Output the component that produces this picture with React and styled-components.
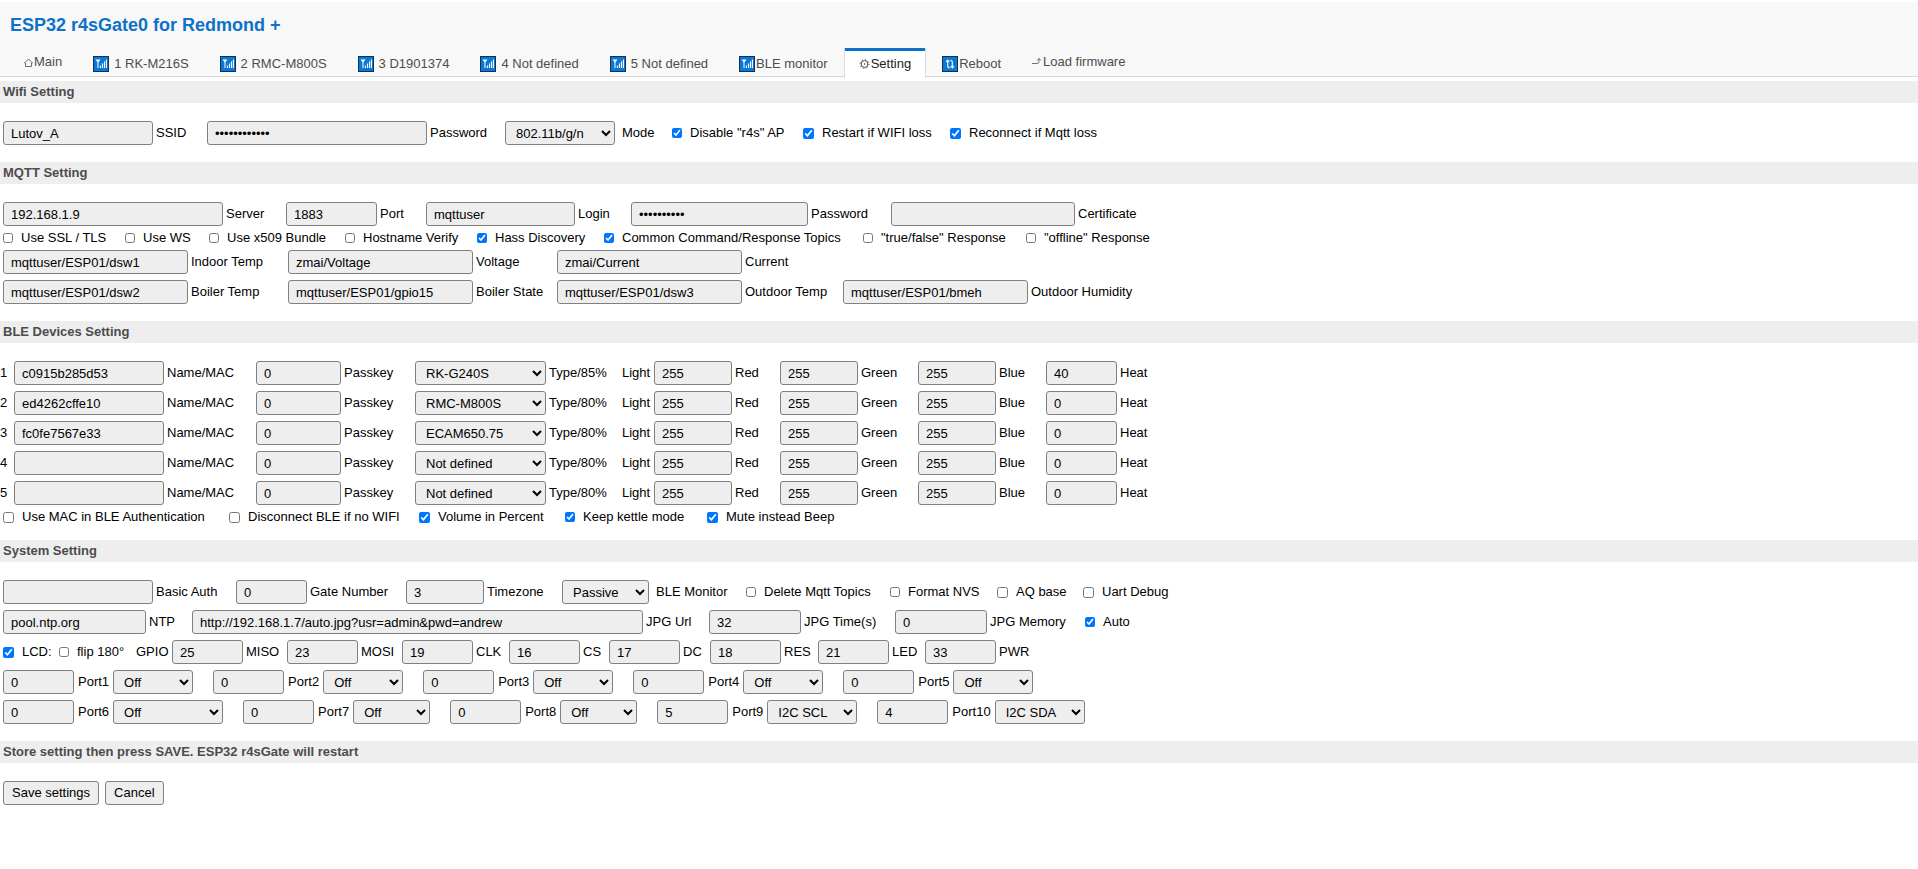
import React, { useId } from "react"
import styled, { createGlobalStyle } from "styled-components"

const devices = [
  { mac: "c0915b285d53", type: "RK-G240S", level: "85%", heat: "40" },
  { mac: "ed4262cffe10", type: "RMC-M800S", level: "80%", heat: "0" },
  { mac: "fc0fe7567e33", type: "ECAM650.75", level: "80%", heat: "0" },
  { mac: "", type: "Not defined", level: "80%", heat: "0" },
  { mac: "", type: "Not defined", level: "80%", heat: "0" },
]

const deviceTypes = ["Not defined", "RK-G240S", "RMC-M800S", "ECAM650.75"]

const lcdPins = [
  { name: "MISO", pin: "25", cell: 115 },
  { name: "MOSI", pin: "23", cell: 115 },
  { name: "CLK", pin: "19", cell: 107 },
  { name: "CS", pin: "16", cell: 100 },
  { name: "DC", pin: "17", cell: 101 },
  { name: "RES", pin: "18", cell: 108 },
  { name: "LED", pin: "21", cell: 107 },
  { name: "PWR", pin: "33", cell: 107 },
]

const portRows = [
  [
    { id: 1, pin: "0", mode: "Off", width: 80 },
    { id: 2, pin: "0", mode: "Off", width: 80 },
    { id: 3, pin: "0", mode: "Off", width: 80 },
    { id: 4, pin: "0", mode: "Off", width: 80 },
    { id: 5, pin: "0", mode: "Off", width: 80 },
  ],
  [
    { id: 6, pin: "0", mode: "Off", width: 110 },
    { id: 7, pin: "0", mode: "Off", width: 77 },
    { id: 8, pin: "0", mode: "Off", width: 77 },
    { id: 9, pin: "5", mode: "I2C SCL", width: 90 },
    { id: 10, pin: "4", mode: "I2C SDA", width: 90 },
  ],
]

const SignalIcon = () => (
  <Badge viewBox="0 0 16 16" aria-hidden="true">
    <rect x="0.5" y="0.5" width="15" height="15" fill="#0a78d6" stroke="#12304f" />
    <path d="M2.5 3.5h5L5 6.8z" fill="#fff" />
    <path d="M5 6v6" fill="none" stroke="#fff" />
    <path d="M7.4 12V9.5M9.5 12V7.5M11.5 12V5.5M13.4 12V3.5" stroke="#fff" strokeWidth="1.1" />
  </Badge>
)

const RebootIcon = () => (
  <Badge viewBox="0 0 16 16" aria-hidden="true">
    <rect x="0.5" y="0.5" width="15" height="15" fill="#0a78d6" stroke="#12304f" />
    <path
      d="M4 6l1.7-2 1.7 2M5.7 4.5v5.3q0 2 2 2M12 10l-1.7 2-1.7-2M10.3 11.5V6.2q0-2-2-2"
      fill="none"
      stroke="#fff"
      strokeWidth="1.1"
    />
  </Badge>
)

const HomeIcon = () => (
  <Glyph viewBox="0 0 9 12" aria-hidden="true">
    <path d="M0.5 7L4.5 3l4 4H7.5v3.5h-6V7z" />
  </Glyph>
)

const GearIcon = () => (
  <Glyph viewBox="0 0 11 12" $width={11} aria-hidden="true">
    <circle cx="5.5" cy="6" r="3.4" />
    <circle cx="5.5" cy="6" r="4.4" strokeDasharray="1.2 2.25" />
    <circle cx="5.5" cy="6" r="0.4" />
  </Glyph>
)

const UploadIcon = () => (
  <Glyph viewBox="0 0 10 12" $width={10} aria-hidden="true">
    <path d="M0 7.5h5q2 0 2-2V2.5M5 4.5l2-2 2 2" />
  </Glyph>
)

const tabs = [
  { text: "Main", icon: <HomeIcon />, plain: true },
  { text: "1 RK-M216S", icon: <SignalIcon />, spaced: true },
  { text: "2 RMC-M800S", icon: <SignalIcon />, spaced: true },
  { text: "3 D1901374", icon: <SignalIcon />, spaced: true },
  { text: "4 Not defined", icon: <SignalIcon />, spaced: true },
  { text: "5 Not defined", icon: <SignalIcon />, spaced: true },
  { text: "BLE monitor", icon: <SignalIcon /> },
  { text: "Setting", icon: <GearIcon />, active: true },
  { text: "Reboot", icon: <RebootIcon /> },
  { text: "Load firmware", icon: <UploadIcon />, plain: true },
]

const Field = ({ label, value, width, cell, type = "text" }) => {
  const id = useId()
  return (
    <Cell $cell={cell}>
      <TextInput id={id} type={type} defaultValue={value} $width={width} />
      <label htmlFor={id}>{label}</label>
    </Cell>
  )
}

const Choice = ({ label, value, options = [value], width, cell, wide }) => {
  const id = useId()
  return (
    <Cell $cell={cell} $wide={wide}>
      <Select id={id} defaultValue={value} $width={width}>
        {options.map(option => (
          <option key={option}>{option}</option>
        ))}
      </Select>
      <label htmlFor={id}>{label}</label>
    </Cell>
  )
}

const Check = ({ label, checked, large, cell }) => (
  <CheckLabel $cell={cell}>
    <Checkbox type="checkbox" defaultChecked={checked} $large={large} />
    {label}
  </CheckLabel>
)

const Port = ({ id, pin, mode, width }) => (
  <PortCell>
    <TextInput id={`port${id}`} type="text" defaultValue={pin} $width={71} />
    <label htmlFor={`port${id}`}>Port{id}</label>
    <Select aria-label={`Port${id} mode`} defaultValue={mode} $width={width}>
      {["Off", "I2C SCL", "I2C SDA"].map(option => (
        <option key={option}>{option}</option>
      ))}
    </Select>
  </PortCell>
)

export default () => (
  <>
    <GlobalStyle />
    <Header>
      <h1>ESP32 r4sGate0 for Redmond +</h1>
      <Nav>
        {tabs.map(tab => (
          <Tab
            key={tab.text}
            href="#"
            $active={tab.active}
            $plain={tab.plain}
            $spaced={tab.spaced}
          >
            {tab.icon}
            {tab.text}
          </Tab>
        ))}
      </Nav>
    </Header>
    <form onSubmit={e => e.preventDefault()}>
      <Heading>Wifi Setting</Heading>
      <Fields>
        <Row>
          <Field label="SSID" value="Lutov_A" width={150} cell={204} />
          <Field label="Password" type="password" value="esp32gateway" width={220} cell={298} />
          <Choice label="Mode" value="802.11b/g/n" width={110} cell={167} wide />
          <Check label={`Disable "r4s" AP`} checked cell={131} />
          <Check label="Restart if WIFI loss" checked large cell={147} />
          <Check label="Reconnect if Mqtt loss" checked large />
        </Row>
      </Fields>

      <Heading>MQTT Setting</Heading>
      <Fields>
        <Row>
          <Field label="Server" value="192.168.1.9" width={220} cell={283} />
          <Field label="Port" value="1883" width={91} cell={140} />
          <Field label="Login" value="mqttuser" width={149} cell={205} />
          <Field label="Password" type="password" value="mqttsecret" width={177} cell={260} />
          <Field label="Certificate" value="" width={184} />
        </Row>
        <CheckRow>
          <Check label="Use SSL / TLS" cell={122} />
          <Check label="Use WS" cell={84} />
          <Check label="Use x509 Bundle" cell={136} />
          <Check label="Hostname Verify" cell={132} />
          <Check label="Hass Discovery" checked cell={127} />
          <Check label="Common Command/Response Topics" checked cell={259} />
          <Check label={`"true/false" Response`} cell={163} />
          <Check label={`"offline" Response`} />
        </CheckRow>
        <Row>
          <Field label="Indoor Temp" value="mqttuser/ESP01/dsw1" width={185} cell={285} />
          <Field label="Voltage" value="zmai/Voltage" width={185} cell={269} />
          <Field label="Current" value="zmai/Current" width={185} />
        </Row>
        <Row>
          <Field label="Boiler Temp" value="mqttuser/ESP01/dsw2" width={185} cell={285} />
          <Field label="Boiler State" value="mqttuser/ESP01/gpio15" width={185} cell={269} />
          <Field label="Outdoor Temp" value="mqttuser/ESP01/dsw3" width={185} cell={286} />
          <Field label="Outdoor Humidity" value="mqttuser/ESP01/bmeh" width={185} />
        </Row>
      </Fields>

      <Heading>BLE Devices Setting</Heading>
      <Fields>
        {devices.map((device, index) => (
          <DeviceRow key={index}>
            <Index>{index + 1}</Index>
            <Field label="Name/MAC" value={device.mac} width={150} cell={242} />
            <Field label="Passkey" value="0" width={85} cell={159} />
            <Choice
              label={`Type/${device.level}`}
              value={device.type}
              options={deviceTypes}
              width={131}
              cell={207}
            />
            <Light>Light</Light>
            <Field label="Red" value="255" width={78} cell={126} />
            <Field label="Green" value="255" width={78} cell={138} />
            <Field label="Blue" value="255" width={78} cell={128} />
            <Field label="Heat" value={device.heat} width={71} />
          </DeviceRow>
        ))}
        <CheckRow>
          <Check label="Use MAC in BLE Authentication" large cell={226} />
          <Check label="Disconnect BLE if no WIFI" large cell={190} />
          <Check label="Volume in Percent" checked large cell={146} />
          <Check label="Keep kettle mode" checked cell={142} />
          <Check label="Mute instead Beep" checked large />
        </CheckRow>
      </Fields>

      <Heading>System Setting</Heading>
      <Fields>
        <Row>
          <Field label="Basic Auth" value="" width={150} cell={233} />
          <Field label="Gate Number" value="0" width={71} cell={170} />
          <Field label="Timezone" value="3" width={78} cell={156} />
          <Choice label="BLE Monitor" value="Passive" width={87} cell={184} wide />
          <Check label="Delete Mqtt Topics" cell={144} />
          <Check label="Format NVS" cell={107} />
          <Check label="AQ base" large cell={86} />
          <Check label="Uart Debug" large />
        </Row>
        <Row>
          <Field label="NTP" value="pool.ntp.org" width={143} cell={189} />
          <Field
            label="JPG Url"
            value="http://192.168.1.7/auto.jpg?usr=admin&pwd=andrew"
            width={451}
            cell={517}
          />
          <Field label="JPG Time(s)" value="32" width={92} cell={186} />
          <Field label="JPG Memory" value="0" width={92} cell={190} />
          <Check label="Auto" checked />
        </Row>
        <Row>
          <Check label="LCD:" checked large cell={56} />
          <Check label="flip 180°" cell={77} />
          <Gpio>GPIO</Gpio>
          {lcdPins.map(({ name, pin, cell }) => (
            <Field key={name} label={name} value={pin} width={71} cell={cell} />
          ))}
        </Row>
        {portRows.map((ports, index) => (
          <PortRow key={index}>
            {ports.map(port => (
              <Port key={port.id} {...port} />
            ))}
          </PortRow>
        ))}
      </Fields>

      <Heading>Store setting then press SAVE. ESP32 r4sGate will restart</Heading>
      <Fields>
        <ButtonRow>
          <Button type="submit">Save settings</Button>
          <Button type="reset">Cancel</Button>
        </ButtonRow>
      </Fields>
    </form>
  </>
)

const GlobalStyle = createGlobalStyle`
  * {
    box-sizing: border-box;
  }
  body {
    margin: 0;
    padding-top: 2px;
    background-color: #fff;
    color: #000;
    font-family: "Liberation Sans", Arial, sans-serif;
    font-size: 13px;
    line-height: 16px;
  }
  input, select, button {
    font: inherit;
    color: inherit;
  }
`
const Header = styled.header`
  background-color: #f8f8f8;
  border-bottom: 1px solid #d8d8d8;
  margin-bottom: 4px;
  h1 {
    margin: 0;
    padding: 12px 10px;
    font-size: 18px;
    line-height: 22px;
    color: #0d72c7;
  }
`
const Nav = styled.nav`
  display: flex;
  align-items: flex-start;
  gap: 1px;
  height: 28px;
  padding-left: 9px;
`
const Tab = styled.a`
  display: flex;
  align-items: center;
  gap: ${props => (props.$spaced ? `5px` : `1px`)};
  height: ${props => (props.$plain ? `27px` : `30px`)};
  padding: 0 14px 2px;
  border: 1px solid transparent;
  border-top: 3px solid transparent;
  border-bottom: 0;
  color: #4c4c4c;
  text-decoration: none;
  white-space: nowrap;
  ${props =>
    props.$active &&
    `
    background-color: #fff;
    border-color: #0d72c7 #ddd;
    border-radius: 2px 2px 0 0;
    color: #222;
  `}
`
const Badge = styled.svg`
  width: 16px;
  height: 16px;
`
const Glyph = styled.svg`
  width: ${props => props.$width || 9}px;
  height: 12px;
  fill: none;
  stroke: currentColor;
  stroke-width: 0.8;
`
const Heading = styled.h2`
  margin: 0;
  padding: 0 3px;
  background-color: #eee;
  color: #4c4c4c;
  font-size: 13px;
  line-height: 22px;
`
const Fields = styled.div`
  display: flex;
  flex-direction: column;
  gap: 6px;
  padding: 18px 0 17px;
`
const Row = styled.div`
  display: flex;
  align-items: center;
  height: 24px;
  padding-left: 3px;
  white-space: nowrap;
`
const CheckRow = styled(Row)`
  margin: -6px 0;
`
const DeviceRow = styled(Row)`
  padding-left: 0;
`
const PortRow = styled(Row)`
  gap: 20px;
`
const ButtonRow = styled(Row)`
  gap: 6px;
`
const Cell = styled.div`
  display: flex;
  flex: none;
  align-items: center;
  gap: ${props => (props.$wide ? `7px` : `3px`)};
  width: ${props => (props.$cell ? `${props.$cell}px` : `auto`)};
`
const PortCell = styled.div`
  display: flex;
  align-items: center;
  gap: 4px;
`
const CheckLabel = styled.label`
  display: flex;
  flex: none;
  align-items: center;
  gap: 8px;
  width: ${props => (props.$cell ? `${props.$cell}px` : `auto`)};
`
const Checkbox = styled.input`
  width: ${props => (props.$large ? 11 : 10)}px;
  height: ${props => (props.$large ? 11 : 10)}px;
  margin: 0;
`
const TextInput = styled.input`
  width: ${props => props.$width}px;
  height: 24px;
  padding: 0 7px;
  background-color: #eee;
  border: 1px solid #808080;
  border-radius: 3px;
`
const Select = styled.select`
  width: ${props => props.$width}px;
  height: 24px;
  padding: 0 2px 0 6px;
  background-color: #eee;
  border: 1px solid #808080;
  border-radius: 3px;
`
const Button = styled.button`
  height: 24px;
  padding: 0 8px;
  background-color: #eee;
  border: 1px solid #808080;
  border-radius: 3px;
`
const Index = styled.span`
  width: 14px;
`
const Light = styled.span`
  width: 32px;
`
const Gpio = styled.span`
  width: 36px;
`
